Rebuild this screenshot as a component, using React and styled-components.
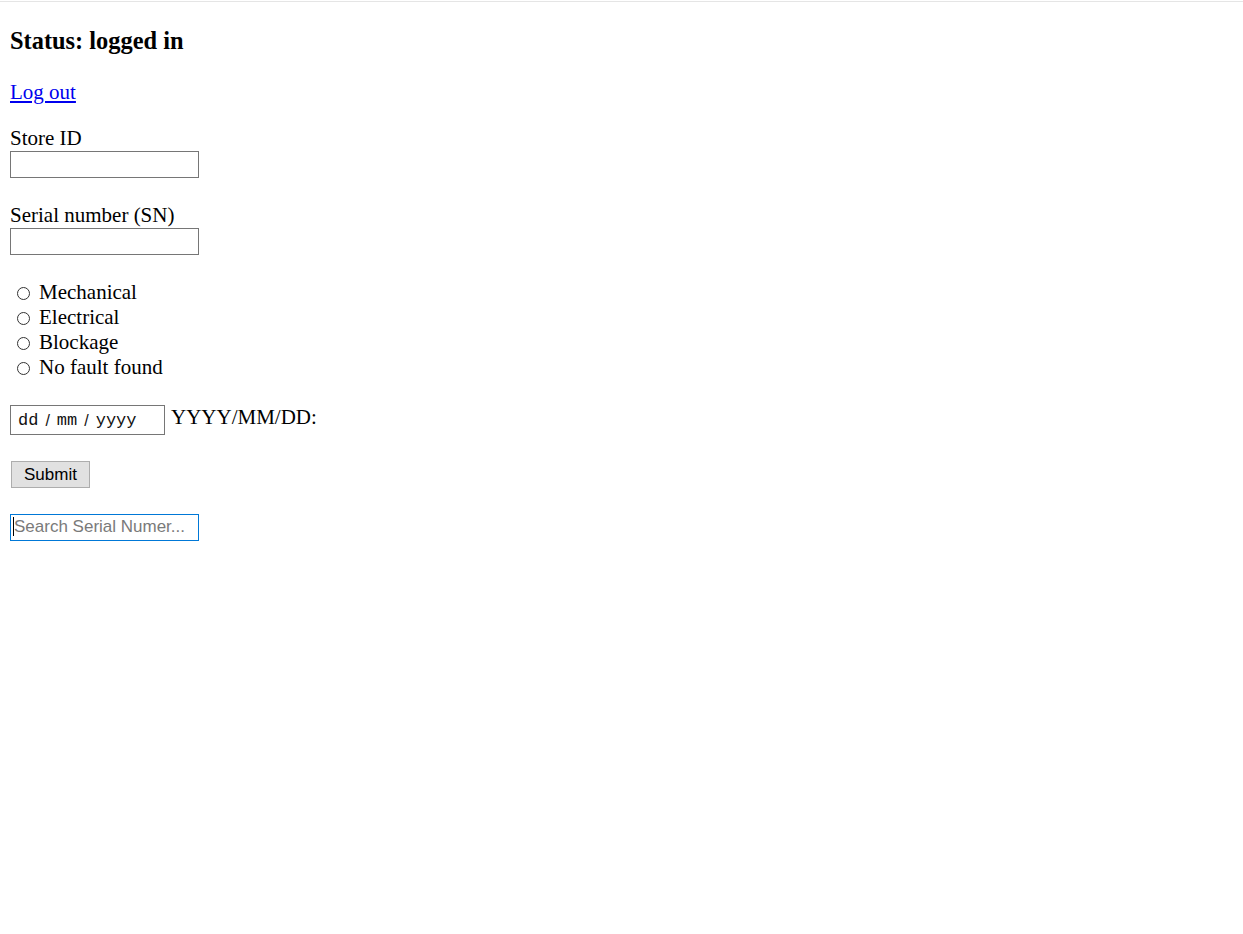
import React from "react";
import styled, { createGlobalStyle } from "styled-components";

const GlobalStyle = createGlobalStyle`
  html, body {
    margin: 0;
    padding: 0;
    background: #fff;
  }
  body {
    font-family: "Liberation Serif", "Times New Roman", serif;
    font-size: 21px;
    color: #000;
  }
`;

const Page = styled.div`
  border-top: 1px solid #e5e5e5;
  margin-top: 1px;
  padding: 0 10px;
`;

const Status = styled.h3`
  margin: 0;
  padding-top: 25px;
  font-size: 24.4px;
  font-weight: bold;
  line-height: 28px;
`;

const LinkLine = styled.p`
  margin: 25px 0 0;
  line-height: 24px;
`;

const Logout = styled.a`
  color: #0000ee;
  text-decoration: underline;
  cursor: pointer;
`;

const Form = styled.form`
  display: flex;
  flex-direction: column;
  align-items: flex-start;
`;

const Field = styled.div`
  display: flex;
  flex-direction: column;
  align-items: flex-start;
  margin-top: ${(p) => p.$top}px;
`;

const Label = styled.label`
  line-height: 24px;
  margin-bottom: 1px;
`;

const TextInput = styled.input`
  box-sizing: border-box;
  width: 189px;
  height: 27px;
  margin: 0;
  border: 1px solid ${(p) => (p.$focused ? "#0078d7" : "#767676")};
  padding: 1px 3px;
  font-family: "Liberation Sans", Arial, sans-serif;
  font-size: 17px;
  outline: none;
  &::placeholder {
    color: #7a7a7a;
  }
`;

const RadioGroup = styled.div`
  margin-top: 25px;
  display: flex;
  flex-direction: column;
`;

const RadioRow = styled.label`
  display: flex;
  align-items: flex-start;
  height: 25px;
  line-height: 25px;
  padding-left: 7px;
`;

const Radio = styled.span`
  box-sizing: border-box;
  flex: none;
  width: 13px;
  height: 13px;
  border: 1px solid #333;
  border-radius: 50%;
  margin: 7px 9px 0 0;
`;

const DateRow = styled.div`
  display: flex;
  align-items: flex-start;
  margin-top: 25px;
  gap: 6px;
`;

const DateBox = styled.div`
  box-sizing: border-box;
  width: 155px;
  height: 30px;
  border: 1px solid #767676;
  display: flex;
  align-items: center;
  padding: 1px 0 0 7px;
  font-family: "Liberation Mono", "Courier New", monospace;
  font-size: 17px;
  color: #111;
`;

const Sep = styled.span`
  padding: 0 7px;
  font-family: "Liberation Sans", Arial, sans-serif;
  font-size: 16px;
`;

const DateHint = styled.span`
  line-height: 24px;
`;

const SubmitButton = styled.button`
  box-sizing: border-box;
  margin: 26px 0 0 1px;
  width: 79px;
  height: 27px;
  background: #e1e1e1;
  border: 1px solid #adadad;
  font-family: "Liberation Sans", Arial, sans-serif;
  font-size: 17px;
  color: #000;
  padding: 0;
`;

const SearchWrap = styled.div`
  margin-top: 25px;
  position: relative;
`;

const Caret = styled.span`
  position: absolute;
  left: 3px;
  top: 4px;
  width: 1px;
  height: 19px;
  background: #000;
`;

const faults = ["Mechanical", "Electrical", "Blockage", "No fault found"];

export default function App() {
  return (
    <>
      <GlobalStyle />
      <Page>
        <Status>Status: logged in</Status>
        <LinkLine>
          <Logout href="#">Log out</Logout>
        </LinkLine>
        <Form onSubmit={(e) => e.preventDefault()}>
          <Field $top={22}>
            <Label>Store ID</Label>
            <TextInput type="text" />
          </Field>
          <Field $top={25}>
            <Label>Serial number (SN)</Label>
            <TextInput type="text" />
          </Field>
          <RadioGroup>
            {faults.map((t) => (
              <RadioRow key={t}>
                <Radio />
                {t}
              </RadioRow>
            ))}
          </RadioGroup>
          <DateRow>
            <DateBox>
              <span>dd</span>
              <Sep>/</Sep>
              <span>mm</span>
              <Sep>/</Sep>
              <span>yyyy</span>
            </DateBox>
            <DateHint>YYYY/MM/DD:</DateHint>
          </DateRow>
          <SubmitButton type="submit">Submit</SubmitButton>
          <SearchWrap>
            <TextInput type="text" placeholder="Search Serial Numer..." $focused />
            <Caret />
          </SearchWrap>
        </Form>
      </Page>
    </>
  );
}
